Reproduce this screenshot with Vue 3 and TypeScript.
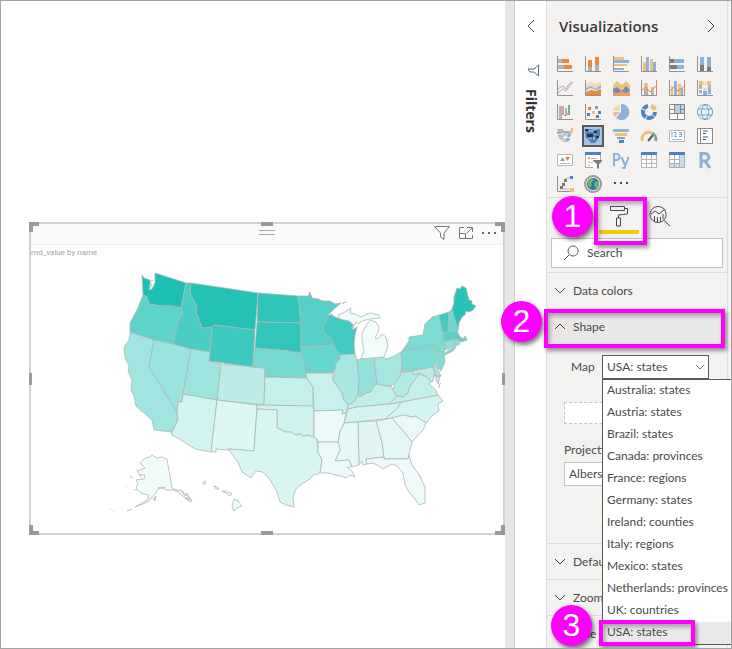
<script setup lang="ts">
import { ref } from 'vue'

interface Stroke {
  d: string
  f?: string
  s?: string
  w?: number
}
interface VisualType {
  name: string
  parts: Stroke[]
}
interface Region {
  name: string
  fill: string
  d: string
}

const ORANGE = '#e8893c'
const SAND = '#edc17c'
const BLUE = '#8db1d8'
const DEEP = '#4a84bd'
const GREY = '#b4b2b0'
const DARK = '#7d7a7a'
const AXIS: Stroke = { d: 'M.5 0V15.5H16', s: '#96928f', w: 1 }
const f = (fill: string, d: string): Stroke => ({ d, f: fill })
const s = (stroke: string, d: string, w = 1): Stroke => ({ d, s: stroke, w })

const visuals: VisualType[] = [
  { name: 'Stacked bar chart', parts: [f(GREY, 'M1 3h4v4H1zM1 9h6v4H1z'), f(ORANGE, 'M5 3h7v4H5zM7 9h8v4H7z'), AXIS] },
  { name: 'Stacked column chart', parts: [f(GREY, 'M3 11h4v4H3zM10 9h4v6h-4z'), f(ORANGE, 'M3 4h4v7H3zM10 1h4v8h-4z'), AXIS] },
  { name: 'Clustered bar chart', parts: [f(SAND, 'M1 1h10v3H1zM1 8h13v2H1z'), f(BLUE, 'M1 4h15v3H1zM1 12h10v2H1z'), AXIS] },
  { name: 'Clustered column chart', parts: [f(SAND, 'M2 6h3v9H2zM9 3h3v12H9z'), f(BLUE, 'M5 1h3v14H5zM12 6h3v9h-3z'), AXIS] },
  { name: '100% stacked bar chart', parts: [f(DARK, 'M1 3h4v4H1zM1 9h7v4H1z'), f(BLUE, 'M5 3h10v4H5zM8 9h7v4H8z'), AXIS] },
  { name: '100% stacked column chart', parts: [f(DARK, 'M3 9h4v6H3zM10 11h4v4h-4z'), f(BLUE, 'M3 1h4v8H3zM10 1h4v10h-4z'), AXIS] },
  { name: 'Line chart', parts: [s('#e8a184', 'M1 13 6 9l3 2 6-8'), s(BLUE, 'M1 9 5 6l4 3 3-5 4-2'), AXIS] },
  { name: 'Area chart', parts: [f('#f3dcbe', 'M1 4 6 1l4 3 6-3v14H1z'), f(BLUE, 'M1 8 6 6l4 3 6-4v10H1z'), f('#f6e6d2', 'M1 10 6 8l5 2 5-2v7H1z'), f(ORANGE, 'M1 12 6 10l5 1 5-2v6H1z'), AXIS] },
  { name: 'Stacked area chart', parts: [f(SAND, 'M0 5 4 1l5 4 4-4 4 4v11H0z'), f('#6d8eb2', 'M0 9 4 7l5 4 4-5 4 4v6H0z'), f('#eb9b69', 'M0 12l4 1 4-2 5 2 4-3v6H0z')] },
  { name: 'Line and stacked column chart', parts: [f(SAND, 'M3 3h4v6H3zM10 7h3v4h-3z'), f(GREY, 'M3 9h4v6H3zM10 11h3v4h-3z'), s('#e58763', 'M1 10 5 7l4 5 6-6M15.500 0v15'), AXIS] },
  { name: 'Line and clustered column chart', parts: [f(SAND, 'M2 6h2v9H2zM9 4h3v11H9z'), f(BLUE, 'M5 1h3v14H5zM12 8h2v7h-2z'), s('#e58763', 'M1 11 5 7l4 4 6-5M15.5 0v15'), AXIS] },
  { name: 'Ribbon chart', parts: [f('#f4dfc0', 'M6 2h4v3H6z'), f('#c9dbec', 'M6 8h4l-1 3H7z'), f(SAND, 'M2 1h4v4H2zM10 1h4v4h-4z'), f(GREY, 'M2 5h3v4H2zM11 5h3v4h-3z'), f(BLUE, 'M2 10h3v3H2zM6 11h4v4H6zM11 9h3v5h-3z'), AXIS] },
  { name: 'Waterfall chart', parts: [f(GREY, 'M2 2h3v13H2zM8 4h2v8H8z'), f('#e6a08b', 'M5 2h2v9H5z'), f('#72b096', 'M11 1h2v10h-2z'), s('#a7a5a3', 'M7 11.500h3v-2h2'), AXIS] },
  { name: 'Scatter chart', parts: [f('#df7d5a', 'M3 3h3v3H3z'), f('#72b096', 'M10 2h3v3h-3z'), f(DEEP, 'M2 9h3v3H2zM13 7h3v3h-3z'), f(SAND, 'M7 7h3v3H7z'), f(DARK, 'M11 11h3v3h-3z'), AXIS] },
  { name: 'Pie chart', parts: [f(BLUE, 'M8 0a8 8 0 1 1-5 14L8 8z'), f('#e9b9ab', 'M7 8 2 13A8 8 0 0 1 0 8z'), f('#f1d9ae', 'M7 1v6H0a7 7 0 0 1 7-6z')] },
  { name: 'Donut chart', parts: [s(DEEP, 'M14 8a6 6 0 1 1-7-6', 4), s(SAND, 'M10 2a6 6 0 0 1 4 4', 4), s('#f3f2f1', 'M1 5l5 2M6 12l-2 4M11 11l4 3', 1)] },
  { name: 'Treemap', parts: [f('#fff', 'M0 0h16v15H0z'), f('#b7cfe4', 'M5 1h10v8H5z'), s('#898684', 'M.5.5h15v15H.5zM5.500 1v8M.5 9.500h15M8.500 9v6M11 5.500h4M11.500 1v8M.5 5.500h5', 1)] },
  { name: 'Map', parts: [f('#e8f3f5', 'M8 0a8 8 0 1 0 .1 0z'), s('#69a3bc', 'M8 .5a7.5 7.5 0 1 0 .1 0zM8 .5c-5 5-5 10 0 15M8 .5c5 5 5 10 0 15M1 5h14M1 11h14', 1)] },
  { name: 'Filled map', parts: [f('#b7b6b4', 'M0 1h6l1 2h6v3H9L7 5H1zM1 9l5 1 1 3-4-2z'), f(BLUE, 'M0 4h4v2H0zM7 3h4v2H7zM1 7h6v2H2zM11 6h3l-1 3h-3zM9 10h4v2l-3 2H8z'), f('#cbcac8', 'M5 5h6v3H7v2H5zM5 11h4v3H6z'), f(SAND, 'M14 0h2v4l-2 3-1-2z')] },
  { name: 'Shape map', parts: [f('#a9c3df', 'M-3-3h22v22H-3z'), f('#4f7fb4', 'M0 1h6l2 1 7-1v6l-2 4-3 4H6l-2-3-3-2z'), f('#1f344d', 'M0 1h3v2H0zM2 6h6v3H2zM9 3h3v2H9zM11 8h3v2h-3z'), f('#8fb3da', 'M4 2h4v2H4zM9 6h3v1H9zM2 10h5v1H3zM8 9h2v3H8z'), s('#5c5a59', 'M-2-2h20v20H-2z', 2)] },
  { name: 'Funnel', parts: [f(BLUE, 'M0 1h16v3H0z'), f(SAND, 'M2 5h12v3H2z'), f('#7ba4d0', 'M4 9h8v2H4z'), f(DEEP, 'M6 12h5v3H6z')] },
  { name: 'Gauge', parts: [s(SAND, 'M1.500 13a6.500 6.500 0 0 1 9-8', 3), s('#72aa93', 'M11 5a6.500 6.500 0 0 1 3.500 8', 3), s('#5e5c5a', 'M7 13l5-6', 2)] },
  { name: 'Card', parts: [f('#fff', 'M0 2h16v12H0z'), s('#b6b4b2', 'M.5 2.500h15v11H.5zM3 11.500h10', 1), s('#79a7cf', 'M2 5l1-1v5M5 4.500h2v2L5.500 8.500H8M10 4.500h2.500v4H10M10 6.500h3', 1)] },
  { name: 'Multi-row card', parts: [f('#fff', 'M1 0h14v16H1z'), s('#8c8987', 'M.5.5h15v15H.5zM3.500 0v16', 1), s(BLUE, 'M6 3h5M6 9h5', 2), s('#555', 'M6 5.500h3M6 11.500h3', 1)] },
  { name: 'KPI', parts: [f('#fff', 'M0 2h16v12H0z'), s('#b9b7b5', 'M.5 2.500h15v11H.5zM3 11.500h10', 1), f('#6eb295', 'M3 9l2.500-4L8 9z'), f('#df7c58', 'M8 5h5l-2.500 4z')] },
  { name: 'Slicer', parts: [f('#fff', 'M1 0h14v15H1z'), s('#aaa', 'M.5 0v15.500H8M15.500 0v8', 1), f(DEEP, 'M0 0h16v3H0z'), f('#e79a70', 'M3 5h2v2H3z'), f(SAND, 'M3 9h2v2H3z'), s('#bbb', 'M6 6.500h6M6 10.500h2M3 13.500h2', 1), f(DARK, 'M8 8h9v1l-3 3v5l-2-1v-4L8 9z')] },
  { name: 'Python visual', parts: [s(BLUE, 'M1 14V2h2.500a3 3 0 0 1 0 6H1M8.500 5l3.500 8M15.500 5l-4 11H9', 2)] },
  { name: 'Table', parts: [f('#fff', 'M0 0h16v16H0z'), s('#b8b6b4', 'M.5 0v15.500h15V0M.5 7.500h15M.5 11.500h15M5.500 2v13M10.500 2v13', 1), f(DEEP, 'M0 0h16v3H0z')] },
  { name: 'Matrix', parts: [f('#fff', 'M0 0h16v16H0z'), f('#c6ddef', 'M0 12h16v4H0zM11 3h5v13h-5z'), s('#b0aeac', 'M.5 0v15.500h15V0M.5 7.500h10M.5 11.500h10M5.500 2v13M10.500 2v13', 1), f(DEEP, 'M0 0h16v3H0z')] },
  { name: 'R script visual', parts: [s(BLUE, 'M4 16V1.500h4a3.500 3.500 0 0 1 0 7.500H4M8 9l5 7', 3)] },
  { name: 'Key influencers', parts: [AXIS, s('#b8b6b4', 'M3 13l3-4 3-7h4M3 13h9', 1), f(DARK, 'M3 10h3v3H3zM5 7h3v3H5zM7 3h3v3H7z'), f(DEEP, 'M13 0h3v3h-3z'), f(SAND, 'M13 12h4v4h-4z')] },
  { name: 'ArcGIS map', parts: [f('#9f9d9b', 'M8-1a9 9 0 1 0 .1 0z'), f('#e2e6e3', 'M8 1a7 7 0 1 0 .1 0z'), f('#2a75b0', 'M8 2a6 6 0 1 0 .1 0z'), f('#6fba5f', 'M3 5l4-3 2 2-3 3 1 2-2 3-2-3zM10 5l4 1-1 5-2 2-2-4z')] },
  { name: 'More visuals', parts: [f('#4b4a49', 'M1 6h2v2H1zM7 6h2v2H7zM13 6h2v2h-2z')] },
]

const states: Region[] = [
  { name: 'Washington', fill: '#1cbfb1', d: '142 275 144 278 150 280 150 285 149 290 152 289 155 283 155 273 186 283 181 308 172 306 160 306 149 304 147 297 143 295' },
  { name: 'Oregon', fill: '#5dd3c9', d: '143 295 147 297 149 304 160 306 172 306 181 308 183 312 178 322 173 344 154 340 130 332 130 323 137 310' },
  { name: 'California', fill: '#a0e5df', d: '130 332 154 340 149 367 177 412 178 420 172 432 154 430 152 420 143 412 136 406 134 396 131 390 132 380 128 371 129 366 125 358 124 347 129 340' },
  { name: 'Nevada', fill: '#9be4de', d: '154 340 173 344 191 349 183 394 182 402 178 402 177 412 149 367' },
  { name: 'Idaho', fill: '#4acdc2', d: '186 283 191 283 190 293 197 307 196 315 198 316 202 328 212 327 210 352 191 349 173 344 178 322 183 312 181 308' },
  { name: 'Montana', fill: '#24c2b5', d: '191 283 258 293 255 330 214 325 212 327 202 328 198 316 196 315 197 307 190 293' },
  { name: 'Wyoming', fill: '#3ccabf', d: '214 325 255 330 253 367 209 361 210 352 212 327' },
  { name: 'Utah', fill: '#9de4de', d: '191 349 210 352 209 361 221 364 217 400 183 394' },
  { name: 'Colorado', fill: '#bdece8', d: '221 364 253 367 265 368 264 405 217 400' },
  { name: 'Arizona', fill: '#d2f3f0', d: '183 394 217 400 211 452 195 449 171 434 178 420 177 412 178 402 182 402' },
  { name: 'New Mexico', fill: '#def6f3', d: '217 400 257 405 254 451 228 449 229 450 216 449 216 452 211 452' },
  { name: 'North Dakota', fill: '#2fc5b9', d: '258 293 298 296 301 323 257 322' },
  { name: 'South Dakota', fill: '#32c6bb', d: '257 322 301 323 301 353 297 352 292 352 290 351 255 348' },
  { name: 'Nebraska', fill: '#75d9d0', d: '255 348 290 351 292 352 297 352 301 353 304 361 307 378 265 377 265 368 253 367' },
  { name: 'Kansas', fill: '#c5efeb', d: '265 377 307 378 311 384 313 387 313 406 264 405' },
  { name: 'Oklahoma', fill: '#cff2ef', d: '257 405 313 406 314 411 314 437 308 435 303 436 300 434 296 435 291 432 286 432 277 428 277 410 257 409' },
  { name: 'Texas', fill: '#d9f5f2', d: '257 409 277 410 277 428 286 432 291 432 296 435 300 434 303 436 308 435 314 437 317 439 318 452 322 460 320 473 316 475 314 474 310 479 302 484 296 489 293 496 294 507 286 505 280 502 277 492 270 480 263 472 256 471 251 478 242 472 238 462 228 449 254 451' },
  { name: 'Minnesota', fill: '#56d0c6', d: '298 296 308 296 310 292 312 298 318 299 323 301 330 301 335 304 341 303 334 309 327 316 327 321 323 326 324 333 330 337 333 342 334 345 301 347 301 323' },
  { name: 'Wisconsin', fill: '#42cbc0', d: '327 316 332 314 333 316 340 319 349 321 353 325 352 330 357 327 355 335 354 344 355 354 339 355 336 350 334 345 333 342 330 337 324 333 323 326 327 321' },
  { name: 'Iowa', fill: '#66d5cb', d: '301 347 334 345 336 350 340 355 340 359 336 363 335 369 333 373 306 373 304 361 301 353' },
  { name: 'Missouri', fill: '#c8f0ec', d: '306 373 333 373 333 380 338 387 342 393 344 400 348 405 346 413 342 414 343 410 314 411 313 387 311 384 307 378' },
  { name: 'Illinois', fill: '#a9e8e2', d: '340 355 355 354 357 360 359 380 358 394 354 402 348 405 344 400 342 393 338 387 333 380 335 369 336 363 340 359' },
  { name: 'Indiana', fill: '#92e1da', d: '357 360 361 359 374 357 377 384 373 387 371 392 366 393 362 396 358 396 359 380' },
  { name: 'Ohio', fill: '#a5e6e1', d: '374 357 382 357 387 359 394 356 401 352 402 366 400 377 395 383 391 386 386 386 377 384' },
  { name: 'Michigan', fill: '#f2fcfb', d: '370 320 376 322 379 327 378 333 375 338 378 339 382 334 386 337 388 346 384 357 361 359 364 350 362 341 362 333 366 326' },
  { name: 'Michigan Upper Peninsula', fill: '#f0fbfa', d: '338 315 345 312 351 308 350 313 355 314 361 317 370 313 379 315 380 318 370 319 362 321 358 324 356 322 353 328 353 324 349 321 340 319' },
  { name: 'Kentucky', fill: '#c2eeea', d: '348 405 354 402 358 396 362 396 366 393 371 392 373 387 377 384 386 386 391 386 393 390 397 396 389 404 357 407 348 409' },
  { name: 'Tennessee', fill: '#d5f4f1', d: '348 409 357 407 389 404 401 402 398 408 391 414 385 419 344 423' },
  { name: 'North Carolina', fill: '#d3f4f1', d: '401 402 438 395 443 401 438 404 439 411 432 416 426 423 415 416 412 417 403 415 392 418 385 419 391 414 398 408' },
  { name: 'South Carolina', fill: '#e9f9f7', d: '392 418 403 415 412 417 415 416 426 423 423 430 412 442 405 433 397 424' },
  { name: 'Georgia', fill: '#e2f7f5', d: '376 421 392 418 397 424 405 433 412 442 409 454 408 459 384 459 382 443' },
  { name: 'Alabama', fill: '#e1f6f4', d: '358 422 376 421 382 443 384 457 366 459 367 464 363 465 362 461 359 465' },
  { name: 'Mississippi', fill: '#e3f7f5', d: '344 423 358 422 359 465 352 467 349 460 335 461 340 450 338 442 340 431' },
  { name: 'Arkansas', fill: '#ebfaf8', d: '314 411 343 410 342 414 346 413 344 423 340 431 338 442 318 442 317 439 314 437' },
  { name: 'Louisiana', fill: '#ebf9f8', d: '318 442 338 442 340 450 335 461 349 460 352 467 347 467 352 471 355 477 350 475 346 478 341 476 335 475 328 473 320 473 322 460 318 452' },
  { name: 'Florida', fill: '#edfaf9', d: '366 459 384 457 384 459 408 459 409 455 412 465 420 476 425 487 425 503 419 505 415 499 409 492 405 485 403 473 397 466 392 464 383 469 377 465 373 463 367 464' },
  { name: 'Virginia', fill: '#c6efec', d: '389 404 397 396 403 397 408 393 410 386 418 374 421 374 427 377 431 382 429 384 436 390 438 395 401 402' },
  { name: 'West Virginia', fill: '#b2eae5', d: '402 366 403 373 412 371 414 375 418 370 420 373 416 378 410 386 408 393 403 397 397 396 393 390 395 383 400 377' },
  { name: 'Pennsylvania', fill: '#7edcd3', d: '401 352 405 349 406 350 433 345 437 350 436 355 440 360 433 367 403 372' },
  { name: 'New York', fill: '#7bdcd3', d: '402 351 409 341 409 337 423 335 425 324 432 317 439 315 443 333 445 349 444 353 437 350 433 345 406 350' },
  { name: 'Long Island', fill: '#75d9d0', d: '444 354 449 350 456 347 453 351 445 355' },
  { name: 'New Jersey', fill: '#7edcd3', d: '437 350 444 353 445 362 441 371 436 366 440 360 436 355' },
  { name: 'Maryland', fill: '#bdece8', d: '412 371 433 367 436 376 440 376 438 384 434 374 433 381 431 382 427 377 421 374 420 373 414 375' },
  { name: 'Delaware', fill: '#a3e6e0', d: '433 367 436 366 441 376 436 376' },
  { name: 'Vermont', fill: '#42cbc0', d: '439 315 449 312 448 332 443 333' },
  { name: 'New Hampshire', fill: '#6fd8ce', d: '449 312 452 309 458 330 457 332 448 333' },
  { name: 'Maine', fill: '#28c3b6', d: '452 309 454 303 454 297 457 288 460 289 462 286 466 288 469 300 472 301 472 304 476 306 473 310 469 312 466 311 465 315 462 317 459 323 458 330' },
  { name: 'Massachusetts', fill: '#5bd1c7', d: '443 333 457 331 460 337 464 339 465 336 467 340 461 342 457 339 444 341' },
  { name: 'Connecticut', fill: '#88dfd7', d: '444 341 455 340 456 346 445 350' },
  { name: 'Rhode Island', fill: '#8adfd7', d: '455 340 458 339 460 344 456 346' },
  { name: 'Alaska', fill: '#f0fbfa', d: '140 463 142 461 145 458 150 457 152 455 157 458 162 457 167 459 172 488 177 490 182 491 191 499 189 501 183 496 177 491 171 490 166 490 164 487 162 489 159 487 156 493 153 496 149 501 143 504 135 507 142 503 148 499 149 495 144 494 141 493 136 488 138 483 136 480 144 479 145 475 140 475 137 471 145 468' },
  { name: 'Kodiak', fill: '#e5eeee', d: '153 499 156 496 155 501' },
  { name: 'Kauai', fill: '#edfaf9', d: '203 482 204 481 206 482 205 484 203 484' },
  { name: 'Oahu', fill: '#edfaf9', d: '214 486 217 487 219 489 216 489' },
  { name: 'Molokai', fill: '#edfaf9', d: '222 491 226 491 225 493' },
  { name: 'Maui', fill: '#edfaf9', d: '226 493 229 492 232 494 230 496 228 495' },
  { name: 'Hawaii', fill: '#edfaf9', d: '234 499 238 501 242 506 237 508 234 511 232 506' },
]

const islands = 'M110 509h1m2 2h1m2-1h1m10 1 5-2M130 476l3 2M126 486h1M134 489l3 2M140 411h1M342 303l4-1m-3 2 3-3M439 388l1-5 1 1M418 473l3 5M181 490l4 6 2-3 3 6-5-1 6 4 1-3M159 489l3-2 3 1-2 2M139 475l3 3M153 280l-3 2 2 3-3 4'

const mapNames: string[] = [
  'Australia: states', 'Austria: states', 'Brazil: states', 'Canada: provinces',
  'France: regions', 'Germany: states', 'Ireland: counties', 'Italy: regions',
  'Mexico: states', 'Netherlands: provinces', 'UK: countries', 'USA: states',
]
const selectedMap = ref('USA: states')
const projection = ref('Albers USA')
const activeVisual = ref('Shape map')
const search = ref('')
</script>

<template>
  <div class="app">
    <main class="canvas">
      <section class="visual" aria-label="rnd_value by name">
        <header class="visual-header">
          <span class="grip"></span>
          <button class="ghost" aria-label="Filters on visual">
            <svg width="18" height="16" viewBox="0 0 18 16"><path d="M1.500 1.500h15L11 8v6.500L7.500 12V8z" /></svg>
          </button>
          <button class="ghost" aria-label="Focus mode">
            <svg width="16" height="14" viewBox="0 0 16 14"><path d="M6 1.500H1.500v11h13V9M9 1.500h5.500V6M14 2 8.500 7.500M1.500 7.500h6v5" /></svg>
          </button>
          <button class="ghost dots" aria-label="More options">
            <svg width="16" height="4" viewBox="0 0 16 4"><path d="M1 1h2v2H1zM7 1h2v2H7zM13 1h2v2h-2z" /></svg>
          </button>
        </header>
        <p class="visual-title">rnd_value by name</p>
        <svg class="map" viewBox="31 261 472 271" role="img" aria-label="Shape map of USA states">
          <polygon v-for="r in states" :key="r.name" :points="r.d" :fill="r.fill" />
          <path class="islands" :d="islands" />
        </svg>
        <i class="handle tl"></i><i class="handle tr"></i><i class="handle bl"></i><i class="handle br"></i>
        <i class="mid top"></i><i class="mid bottom"></i><i class="mid left"></i><i class="mid right"></i>
      </section>
    </main>

    <div class="splitter"></div>

    <aside class="filters">
      <button class="ghost" aria-label="Expand filters">
        <svg width="8" height="14" viewBox="0 0 8 14"><path d="M7 1 1 7l6 6" /></svg>
      </button>
      <svg class="funnel" width="12" height="13" viewBox="0 0 12 13"><path d="M11.500 1v11L7 8H3L1 5h6z" /></svg>
      <h2>Filters</h2>
    </aside>

    <aside class="panel">
      <header class="panel-header">
        <h2>Visualizations</h2>
        <button class="ghost" aria-label="Collapse visualizations">
          <svg width="8" height="14" viewBox="0 0 8 14"><path d="M1 1l6 6-6 6" /></svg>
        </button>
      </header>

      <div class="gallery">
        <button
          v-for="v in visuals"
          :key="v.name"
          :aria-label="v.name"
          :aria-pressed="v.name === activeVisual"
          @click="activeVisual = v.name"
        >
          <svg width="16" height="16" viewBox="0 0 16 16">
            <path
              v-for="(p, i) in v.parts"
              :key="i"
              :d="p.d"
              :fill="p.f ?? 'none'"
              :stroke="p.s ?? 'none'"
              :stroke-width="p.w ?? 0"
            />
          </svg>
        </button>
      </div>

      <div class="tabs">
        <div class="tab-wrap">
          <button class="tab active" aria-label="Format">
            <svg width="20" height="22" viewBox="0 0 20 22"><path d="M1.500 1.500h14v4h-14zM15.500 3.500h3v5.500l-9 1v3M7.500 13h4v8h-4z" /></svg>
          </button>
          <span class="outline tab-outline"></span>
          <span class="badge tab-badge">1</span>
        </div>
        <button class="tab" aria-label="Analytics">
          <svg width="22" height="22" viewBox="0 0 22 22"><path d="M9 1.500a8 8 0 1 0 .1 0zM14.500 15 21 21M2 9l4-3 4 3 6-5M5.500 11v5M8.500 12v5M11.500 12v5M14 9v5" /></svg>
        </button>
      </div>

      <label class="search">
        <svg width="16" height="16" viewBox="0 0 16 16"><path d="M10 1a5 5 0 1 0 .1 0zM6.500 9.500 1 15" /></svg>
        <input v-model="search" type="text" placeholder="Search" aria-label="Search" />
      </label>

      <section class="group">
        <button class="row">
          <svg width="12" height="7" viewBox="0 0 12 7"><path d="M1 1l5 5 5-5" /></svg>Data colors
        </button>
      </section>

      <section class="group shape">
        <button class="row open">
          <svg width="12" height="7" viewBox="0 0 12 7"><path d="M1 6l5-5 5 5" /></svg>Shape
        </button>
        <span class="outline row-outline"></span>
        <span class="badge row-badge">2</span>
        <div class="body">
          <div class="field">
            <label for="map-name">Map</label>
            <div class="picker">
              <select id="map-name" v-model="selectedMap">
                <option v-for="m in mapNames" :key="m">{{ m }}</option>
              </select>
              <svg class="caret" width="10" height="6" viewBox="0 0 10 6"><path d="M1 1l4 4 4-4" /></svg>
              <ul class="menu" role="listbox" aria-label="Map">
                <li
                  v-for="m in mapNames"
                  :key="m"
                  role="option"
                  :class="{ chosen: m === selectedMap }"
                  :aria-selected="m === selectedMap"
                  @click="selectedMap = m"
                >
                  {{ m }}
                  <template v-if="m === 'USA: states'">
                    <span class="outline item-outline"></span>
                    <span class="badge item-badge">3</span>
                  </template>
                </li>
              </ul>
            </div>
          </div>
          <button class="add-map" aria-label="Add map"></button>
          <label class="projection" for="projection">Projection</label>
          <select id="projection" v-model="projection">
            <option>Albers USA</option>
            <option>Equirectangular</option>
            <option>Mercator</option>
            <option>Orthographic</option>
          </select>
        </div>
      </section>

      <section class="group">
        <button class="row">
          <svg width="12" height="7" viewBox="0 0 12 7"><path d="M1 1l5 5 5-5" /></svg>Default color
        </button>
      </section>
      <section class="group">
        <button class="row">
          <svg width="12" height="7" viewBox="0 0 12 7"><path d="M1 1l5 5 5-5" /></svg>Zoom
        </button>
      </section>
      <section class="group">
        <button class="row">
          <svg width="12" height="7" viewBox="0 0 12 7"><path d="M1 1l5 5 5-5" /></svg>Title
        </button>
      </section>
    </aside>
    <div class="gutter"></div>
  </div>
</template>

<style>
body {
  margin: 0;
}
</style>

<style scoped>
* {
  box-sizing: border-box;
}
.app {
  display: flex;
  height: 100vh;
  overflow: hidden;
  border: 1px solid #a3a3a3;
  background: #fff;
  color: #4b4a49;
  font: 12px/20px Lato, "Open Sans", sans-serif;
}
h2,
p,
ul {
  margin: 0;
  padding: 0;
}
h2 {
  font-family: "Open Sans", "Noto Sans", sans-serif;
}
button,
select,
input {
  font: inherit;
  color: inherit;
}
button {
  padding: 0;
  border: 0;
  background: none;
}
svg {
  display: block;
  flex: none;
  fill: none;
  stroke: #4b4a49;
}
.canvas {
  flex: 1;
  min-width: 0;
  padding: 221px 0 0 28px;
}
.visual {
  position: relative;
  padding-bottom: 1px;
  border: 2px solid #d2d2d2;
}
.visual-header {
  position: relative;
  display: flex;
  justify-content: flex-end;
  align-items: center;
  gap: 7px;
  height: 21px;
  padding: 0 6px 3px 0;
  border-bottom: 1px solid #efefef;
  background: #fafafa;
}
.visual-header svg {
  stroke: #777;
}
.visual-header .dots svg {
  fill: #666;
  stroke: none;
}
.grip {
  position: absolute;
  left: 50%;
  top: 6px;
  width: 16px;
  height: 5px;
  margin-left: -8px;
  border: solid #a8a8a8;
  border-width: 1px 0;
}
.visual-title {
  color: #a5a29f;
  font: 8px/16px Roboto, sans-serif;
}
.map {
  width: 100%;
  height: auto;
}
.map polygon {
  stroke: #adb8b6;
  stroke-width: 0.8;
  stroke-linejoin: round;
}
.map .islands {
  stroke: #b9bdbc;
}
.handle,
.mid {
  position: absolute;
}
.handle {
  width: 10px;
  height: 10px;
  border: 0 solid #999;
}
.tl {
  top: -2px;
  left: -2px;
  border-width: 4px 0 0 4px;
}
.tr {
  top: -2px;
  right: -2px;
  border-width: 4px 4px 0 0;
}
.bl {
  bottom: -2px;
  left: -2px;
  border-width: 0 0 4px 4px;
}
.br {
  bottom: -2px;
  right: -2px;
  border-width: 0 4px 4px 0;
}
.mid {
  background: #999;
}
.top,
.bottom {
  left: 50%;
  width: 12px;
  height: 4px;
  margin-left: -6px;
}
.left,
.right {
  top: 50%;
  width: 3px;
  height: 12px;
  margin-top: -6px;
}
.top {
  top: -2px;
}
.bottom {
  bottom: -2px;
}
.left {
  left: -2px;
}
.right {
  right: -2px;
}
.splitter {
  width: 10px;
  border-right: 1px solid #cfcfcf;
  background: #e6e6e6;
}
.filters {
  display: flex;
  flex-direction: column;
  align-items: center;
  width: 31px;
  padding-top: 18px;
}
.filters .funnel {
  margin: 31px 0 12px 4px;
  stroke: #4b6e8c;
}
.filters h2 {
  writing-mode: vertical-rl;
  color: #333;
  font-size: 14px;
  font-weight: 700;
  line-height: 20px;
}
.panel {
  width: 181px;
  border-left: 1px solid #dedddc;
  background: #f3f2f1;
}
.gutter {
  width: 4px;
  border-left: 1px solid #dedddc;
  background: #f3f2f1;
}
.panel-header {
  display: flex;
  align-items: center;
  justify-content: space-between;
  height: 51px;
  padding: 0 12px 2px;
}
.panel-header h2 {
  color: #3b3a39;
  font-size: 15px;
  font-weight: 600;
}
.gallery {
  display: grid;
  grid-template-columns: repeat(6, 28px);
  grid-auto-rows: 24px;
  padding: 0 4px 1px;
  border-bottom: 1px solid #dedddc;
}
.gallery button {
  display: grid;
  place-items: center;
}
.gallery svg {
  overflow: visible;
}
.tabs {
  display: flex;
  gap: 1px;
  height: 40px;
  padding-left: 52px;
}
.tab-wrap {
  position: relative;
}
.tab {
  display: flex;
  justify-content: center;
  width: 40px;
  height: 36px;
  padding-top: 7px;
}
.tab.active {
  border-bottom: 4px solid #f2c811;
  border-radius: 2px;
}
.outline {
  position: absolute;
  border: 4px solid #f0f;
  box-shadow: 2px 3px 4px rgba(0, 0, 0, 0.4), inset 2px 3px 4px rgba(0, 0, 0, 0.3);
  pointer-events: none;
}
.badge {
  position: absolute;
  width: 41px;
  height: 41px;
  border-radius: 50%;
  background: #f0f;
  box-shadow: 2px 3px 4px rgba(0, 0, 0, 0.5);
  color: #fff;
  font: 32px/41px "Liberation Sans", sans-serif;
  text-align: center;
}
.tab-outline {
  inset: -1px -8px -7px -5px;
}
.tab-badge {
  top: -2px;
  left: -47px;
}
.search {
  display: flex;
  align-items: center;
  gap: 8px;
  height: 30px;
  margin: 0 4px 4px;
  padding: 0 11px;
  border: 1px solid #c3c2c1;
  background: #fff;
}
.search input {
  width: 100%;
  min-width: 0;
  padding: 0;
  border: 0;
  outline: 0;
  background: none;
}
.search input::placeholder {
  color: #4b4a49;
  opacity: 1;
}
.group {
  border-top: 1px solid #dedddc;
}
.shape {
  position: relative;
}
.row {
  display: flex;
  align-items: center;
  gap: 7px;
  width: 100%;
  height: 35px;
  padding-left: 7px;
  text-align: left;
}
.row.open {
  background: #eae8e6;
}
.row-outline {
  top: 0;
  left: -3px;
  right: 2px;
  height: 39px;
}
.row-badge {
  top: -8px;
  left: -46px;
}
.body {
  display: flex;
  flex-direction: column;
  padding: 11px 18px 57px 17px;
}
.field {
  display: flex;
  align-items: center;
  justify-content: space-between;
  padding-left: 7px;
}
.picker {
  position: relative;
  width: 107px;
}
select {
  display: block;
  width: 100%;
  height: 24px;
  padding: 0 4px;
  border: 1px solid #c3c2c1;
  border-radius: 0;
  background: #fff;
  appearance: none;
}
.picker select {
  border-color: #5c5b5a;
}
.caret {
  position: absolute;
  top: 9px;
  right: 4px;
  stroke: #777;
  pointer-events: none;
}
.menu {
  position: absolute;
  z-index: 2;
  top: 24px;
  left: 0;
  width: 130px;
  border: solid #5c5b5a;
  border-width: 1px 0 1px 1px;
  background: #fff;
  list-style: none;
  white-space: nowrap;
}
.menu li {
  position: relative;
  height: 22px;
  padding-left: 4px;
}
.menu .chosen {
  background: #eae9e8;
}
.item-outline {
  top: -2px;
  left: -4px;
  width: 96px;
  height: 26px;
}
.item-badge {
  top: -17px;
  left: -52px;
}
.add-map {
  height: 22px;
  margin: 23px 0 16px;
  border: 1px dashed #c3c2c1;
  background: #fff;
}
.projection {
  margin-bottom: 2px;
}
</style>
